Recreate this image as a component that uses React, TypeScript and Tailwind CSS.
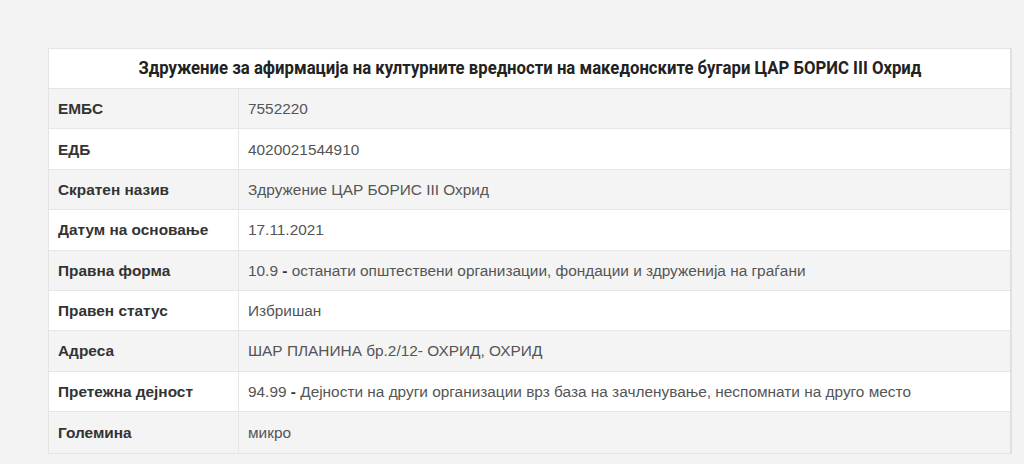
const rows: { label: string; code?: string; value: string }[] = [
  { label: "ЕМБС", value: "7552220" },
  { label: "ЕДБ", value: "4020021544910" },
  { label: "Скратен назив", value: "Здружение ЦАР БОРИС III Охрид" },
  { label: "Датум на основање", value: "17.11.2021" },
  {
    label: "Правна форма",
    code: "10.9",
    value: "останати општествени организации, фондации и здруженија на граѓани",
  },
  { label: "Правен статус", value: "Избришан" },
  { label: "Адреса", value: "ШАР ПЛАНИНА бр.2/12- ОХРИД, ОХРИД" },
  {
    label: "Претежна дејност",
    code: "94.99",
    value: "Дејности на други организации врз база на зачленување, неспомнати на друго место",
  },
  { label: "Големина", value: "микро" },
];

export default function App() {
  return (
    <div className="min-h-[464px] w-[1024px] bg-[#f3f3f3] pt-12 pl-12 font-['Liberation_Sans',Arial,sans-serif]">
      <div className="w-[964px] border border-[#e4e4e4] border-r-2 border-r-[#e0e0e0] bg-white">
        {/* title */}
        <div className="flex h-[40px] items-center justify-center border-b border-[#e4e4e4] bg-white">
          <h2 className="scale-x-[0.88] whitespace-nowrap font-['Roboto',sans-serif] text-[19px] font-bold text-[#222]">
            Здружение за афирмација на културните вредности на македонските бугари ЦАР БОРИС III Охрид
          </h2>
        </div>

        {rows.map((row, i) => (
          <div
            key={row.label}
            className={`flex h-[40.4px] border-b border-[#e6e6e6] last:border-b-0 text-[15.4px] ${
              i % 2 === 0 ? "bg-[#f4f4f4]" : "bg-white"
            }`}
          >
            <div className="flex w-[190px] shrink-0 items-center border-r border-[#e6e6e6] pl-[9px] font-bold text-[#333]">
              {row.label}
            </div>
            <div className="flex items-center pl-[9px] text-[#555]">
              {row.code ? (
                <span>
                  {row.code} <b className="text-[#333]">-</b> {row.value}
                </span>
              ) : (
                row.value
              )}
            </div>
          </div>
        ))}
      </div>
    </div>
  );
}
